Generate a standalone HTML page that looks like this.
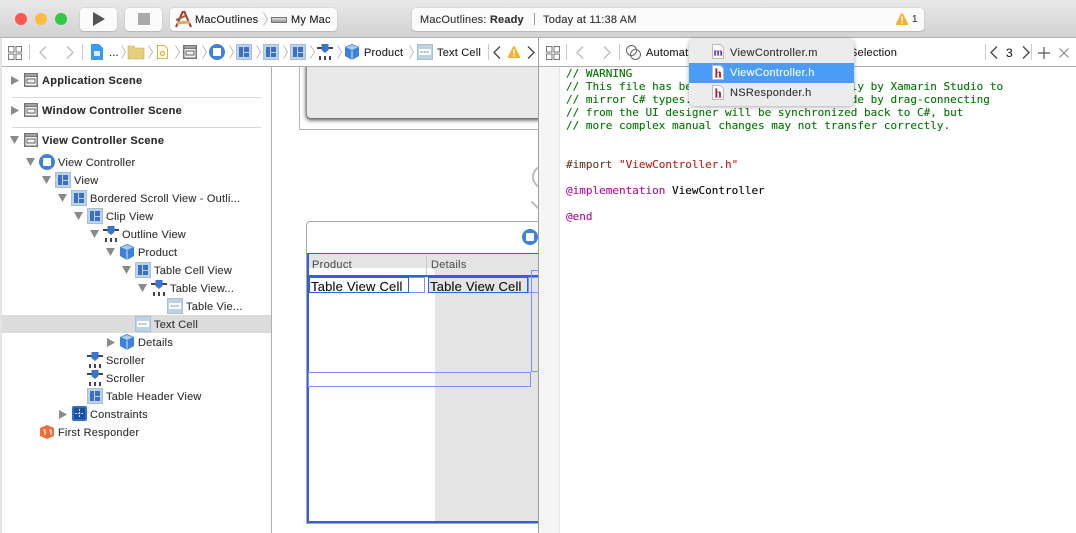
<!DOCTYPE html>
<html><head><meta charset="utf-8">
<style>
html,body{margin:0;padding:0}
body{width:1076px;height:533px;overflow:hidden;position:relative;background:#fff;font-family:"Liberation Sans",sans-serif;font-size:11px;color:#2a2a2a}
.a{position:absolute}
.t{position:absolute;white-space:nowrap;line-height:14px;font-size:11px;letter-spacing:.2px;color:#333;margin-top:1px;-webkit-text-stroke:.12px currentColor}
.b{font-weight:bold;color:#2c2c2c;letter-spacing:.3px}
.i{position:absolute;overflow:visible}
.code{position:absolute;left:566px;font:11px/13px "DejaVu Sans Mono","Liberation Mono",monospace;white-space:pre;color:#007400;-webkit-text-stroke:.1px currentColor}
.btn{position:absolute;top:8px;height:23px;background:#fbfbfb;border-radius:4px;box-shadow:0 1px 1px #b5b5b5,0 0 0 .5px #d0d0d0}
.hl{position:absolute;border:1px solid #7a93f0;box-sizing:border-box}
</style></head><body>
<svg width="0" height="0" style="position:absolute">
<defs>
<symbol id="grid" viewBox="0 0 14 14"><path d="M.5.5h5.500v5.500H.5zM8 .5h5.500v5.500H8zM.5 8h5.500v5.500H.5zM8 8h5.500v5.500H8z" fill="none" stroke="#777" stroke-width="1"/></symbol>
<symbol id="view" viewBox="0 0 16 16"><rect width="16" height="16" fill="#bcd2e6"/><rect x=".5" y=".5" width="15" height="15" fill="none" stroke="#a8c0d6"/><path d="M3 3h4v10H3zM8 3h5v5H8zM8 9h5v4H8z" fill="#3d70c4"/></symbol>
<symbol id="cell" viewBox="0 0 16 16"><rect width="16" height="16" fill="#bcd2e6"/><rect x=".5" y=".5" width="15" height="15" fill="none" stroke="#a8c0d6"/><rect x="2" y="5" width="12" height="6" fill="#fff"/><path d="M3.500 8h2M6.500 8h2M9.500 8h2" stroke="#8aa6c4" stroke-width="1.500"/></symbol>
<symbol id="vc" viewBox="0 0 16 16"><circle cx="8" cy="8" r="8" fill="#3f80d8"/><rect x="4" y="4" width="8" height="8" rx="1" fill="#fff"/></symbol>
<symbol id="outline" viewBox="0 0 16 16"><path d="M0 3h16v2H0z" fill="#444"/><path d="M4.500 0h7v6l-3.500 3-3.500-3z" fill="#3a74cc"/><path d="M2 12h2v4H2zM7 12h2v4H7zM12 12h2v4h-2z" fill="#444"/></symbol>
<symbol id="cube" viewBox="0 0 16 16"><path d="M8 0l7 3v9l-7 4-7-4V3z" fill="#3f80d8"/><path d="M8 1l6 2.300L8 6 2 3.300z" fill="#a9cdf2"/><path d="M8 6.500v9" stroke="#fff" stroke-width=".8"/></symbol>
<symbol id="scene" viewBox="0 0 14 14"><rect width="14" height="14" fill="#777"/><path d="M1.500 1.500h11v1h-11z" fill="#ccc"/><rect x="1.500" y="4" width="11" height="8.500" fill="#f1f1f1"/><rect x="3" y="6" width="8" height="4" fill="none" stroke="#666"/></symbol>
<symbol id="tri" viewBox="0 0 8 9"><path d="M0 0l8 4.500L0 9z" fill="#8a8a8a"/></symbol>
<symbol id="trid" viewBox="0 0 9 8"><path d="M0 0h9L4.500 8z" fill="#8a8a8a"/></symbol>
<symbol id="warn" viewBox="0 0 12 12" preserveAspectRatio="none"><path d="M6 0q.6 0 1 .8l5 10q.3 1.200-1 1.200H1q-1.300 0-1-1.200l5-10Q5.400 0 6 0z" fill="#f7b02c"/><path d="M5.200 3.500h1.600l-.2 4.800H5.400zM5.200 9h1.600v1.500H5.200z" fill="#fff"/></symbol>
<symbol id="sep" viewBox="0 0 5 14"><path d="M.5 .5l4 6.500-4 6.500" fill="none" stroke="#bbb"/></symbol>
<symbol id="doc" viewBox="0 0 12 15"><path d="M.5.500h8l3 3v11H.5z" fill="#fff" stroke="#bbb"/></symbol>
</defs></svg>

<!-- title bar -->
<div class="a" style="left:0;top:0;width:1076px;height:38px;background:linear-gradient(#e9e9e9,#d2d2d2);border-bottom:1px solid #b1b1b1;box-sizing:border-box"></div>
<div class="a" style="left:15px;top:13px;width:12px;height:12px;border-radius:50%;background:#fc5753"></div>
<div class="a" style="left:35px;top:13px;width:12px;height:12px;border-radius:50%;background:#fdbc40"></div>
<div class="a" style="left:55px;top:13px;width:12px;height:12px;border-radius:50%;background:#33c748"></div>
<div class="btn" style="left:80px;width:37px"></div>
<svg class="i" style="left:93px;top:12px" width="12" height="14"><path d="M0 0l12 7-12 7z" fill="#555"/></svg>
<div class="btn" style="left:125px;width:37px"></div>
<div class="a" style="left:138px;top:13px;width:12px;height:12px;background:#a9a9a9"></div>
<div class="btn" style="left:170px;width:167px"></div>
<svg class="i" style="left:175px;top:10px" width="18" height="18"><path d="M8 1L1 17M9 1l7 16" stroke="#b0322e" stroke-width="2" fill="none"/><path d="M2 13l13-1" stroke="#d9b06a" stroke-width="3"/><path d="M1 10l9-4" stroke="#8a6a3a" stroke-width="2"/></svg>
<div class="t" style="left:195px;top:12px;color:#222">MacOutlines</div>
<svg class="i" style="left:263px;top:12px" width="5" height="14"><use href="#sep"/></svg>
<div class="a" style="left:271px;top:17px;width:16px;height:6px;background:linear-gradient(#ddd,#999);border:1px solid #777;box-sizing:border-box"></div>
<div class="t" style="left:291px;top:12px;color:#222">My Mac</div>

<div class="btn" style="left:412px;width:512px"></div>
<div class="t" style="left:420px;top:12px">MacOutlines: <b style="color:#333">Ready</b></div>
<div class="a" style="left:534px;top:13px;width:1px;height:12px;background:#999"></div>
<div class="t" style="left:543px;top:12px">Today at 11:38 AM</div>
<svg class="i" style="left:896px;top:13px" width="12" height="12"><use href="#warn"/></svg>
<div class="t" style="left:912px;top:12px;font-size:10px">1</div>

<!-- jump bar -->
<div class="a" style="left:0;top:38px;width:1076px;height:29px;background:#fff;border-bottom:1px solid #b0b0b0;box-sizing:border-box"></div>
<div class="a" style="left:0;top:38px;width:2px;height:495px;background:#e4e4e4"></div>
<svg class="i" style="left:8px;top:46px" width="14" height="14"><use href="#grid"/></svg>
<div class="a" style="left:29px;top:44px;width:1px;height:16px;background:#ccc"></div>
<svg class="i" style="left:39px;top:46px" width="8" height="13"><path d="M7 .5L1 6.500l6 6" fill="none" stroke="#bbb" stroke-width="1.300"/></svg>
<svg class="i" style="left:66px;top:46px" width="8" height="13"><path d="M1 .5l6 6-6 6" fill="none" stroke="#bbb" stroke-width="1.300"/></svg>
<div class="a" style="left:82px;top:44px;width:1px;height:16px;background:#ccc"></div>
<svg class="i" style="left:91px;top:44px" width="12" height="16"><path d="M0 0h8l4 4v12H0z" fill="#3a9bee"/><rect x="3" y="7" width="6" height="5" fill="#d8edfc"/></svg>
<div class="t" style="left:109px;top:45px;color:#222">...</div>
<svg class="i" style="left:121px;top:45px" width="5" height="14"><use href="#sep"/></svg>
<svg class="i" style="left:128px;top:45px" width="16" height="14"><path d="M0 1h6l1 2h9v11H0z" fill="#e5cf7a" stroke="#c5ab52" stroke-width=".6"/></svg>
<svg class="i" style="left:148px;top:45px" width="5" height="14"><use href="#sep"/></svg>
<svg class="i" style="left:157px;top:45px" width="11" height="14"><path d="M.5.500h7l3 3v10H.5z" fill="#fffbe8" stroke="#e0b050"/><circle cx="5.500" cy="8.500" r="2" fill="none" stroke="#e0a030"/></svg>
<svg class="i" style="left:175px;top:45px" width="5" height="14"><use href="#sep"/></svg>
<svg class="i" style="left:183px;top:45px" width="14" height="14"><use href="#scene"/></svg>
<svg class="i" style="left:202px;top:45px" width="5" height="14"><use href="#sep"/></svg>
<svg class="i" style="left:209px;top:44px" width="16" height="16"><use href="#vc"/></svg>
<svg class="i" style="left:229px;top:45px" width="5" height="14"><use href="#sep"/></svg>
<svg class="i" style="left:236px;top:44px" width="16" height="16"><use href="#view"/></svg>
<svg class="i" style="left:256px;top:45px" width="5" height="14"><use href="#sep"/></svg>
<svg class="i" style="left:263px;top:44px" width="16" height="16"><use href="#view"/></svg>
<svg class="i" style="left:283px;top:45px" width="5" height="14"><use href="#sep"/></svg>
<svg class="i" style="left:290px;top:44px" width="16" height="16"><use href="#view"/></svg>
<svg class="i" style="left:310px;top:45px" width="5" height="14"><use href="#sep"/></svg>
<svg class="i" style="left:317px;top:44px" width="16" height="16"><use href="#outline"/></svg>
<svg class="i" style="left:337px;top:45px" width="5" height="14"><use href="#sep"/></svg>
<svg class="i" style="left:344px;top:44px" width="16" height="16"><use href="#cube"/></svg>
<div class="t" style="left:364px;top:45px;color:#222">Product</div>
<svg class="i" style="left:409px;top:45px" width="5" height="14"><use href="#sep"/></svg>
<svg class="i" style="left:417px;top:44px" width="16" height="16"><use href="#cell"/></svg>
<div class="t" style="left:437px;top:45px;color:#222">Text Cell</div>
<div class="a" style="left:488px;top:44px;width:1px;height:16px;background:#ccc"></div>
<svg class="i" style="left:493px;top:46px" width="8" height="13"><path d="M7 .5L1 6.500l6 6" fill="none" stroke="#444" stroke-width="1.300"/></svg>
<svg class="i" style="left:508px;top:46px" width="12" height="12"><use href="#warn"/></svg>
<svg class="i" style="left:527px;top:46px" width="8" height="13"><path d="M1 .5l6 6-6 6" fill="none" stroke="#444" stroke-width="1.300"/></svg>

<!-- right jump bar -->
<svg class="i" style="left:546px;top:46px" width="14" height="14"><use href="#grid"/></svg>
<div class="a" style="left:566px;top:44px;width:1px;height:16px;background:#ccc"></div>
<svg class="i" style="left:576px;top:46px" width="8" height="13"><path d="M7 .5L1 6.500l6 6" fill="none" stroke="#bbb" stroke-width="1.300"/></svg>
<svg class="i" style="left:603px;top:46px" width="8" height="13"><path d="M1 .5l6 6-6 6" fill="none" stroke="#bbb" stroke-width="1.300"/></svg>
<div class="a" style="left:619px;top:44px;width:1px;height:16px;background:#ccc"></div>
<svg class="i" style="left:626px;top:45px" width="15" height="15"><circle cx="5.500" cy="5.500" r="5" fill="none" stroke="#666"/><circle cx="9.500" cy="9.500" r="5" fill="none" stroke="#666"/></svg>
<div class="t" style="left:646px;top:45px;color:#222">Automatic</div>
<div class="t" style="left:850px;top:45px;color:#222">Selection</div>
<div class="a" style="left:985px;top:44px;width:1px;height:16px;background:#ccc"></div>
<svg class="i" style="left:990px;top:46px" width="8" height="13"><path d="M7 .5L1 6.500l6 6" fill="none" stroke="#444" stroke-width="1.300"/></svg>
<div class="t" style="left:1006px;top:45px;color:#222;font-size:12px">3</div>
<svg class="i" style="left:1022px;top:46px" width="8" height="13"><path d="M1 .5l6 6-6 6" fill="none" stroke="#444" stroke-width="1.300"/></svg>
<div class="a" style="left:1031px;top:44px;width:1px;height:16px;background:#ccc"></div>
<svg class="i" style="left:1038px;top:47px" width="12" height="12"><path d="M6 0v12M0 6h12" stroke="#555" stroke-width="1.200"/></svg>
<svg class="i" style="left:1059px;top:48px" width="10" height="10"><path d="M.5.500l9 9M9.500.500l-9 9" stroke="#888" stroke-width="1.100"/></svg>

<!-- left tree -->
<svg class="i" style="left:11px;top:76px" width="8" height="9"><use href="#tri"/></svg>
<svg class="i" style="left:24px;top:73px" width="14" height="14"><use href="#scene"/></svg>
<div class="t b" style="left:42px;top:73px">Application Scene</div>
<div class="a" style="left:12px;top:97px;width:249px;height:1px;background:#d8d8d8"></div>
<svg class="i" style="left:11px;top:106px" width="8" height="9"><use href="#tri"/></svg>
<svg class="i" style="left:24px;top:103px" width="14" height="14"><use href="#scene"/></svg>
<div class="t b" style="left:42px;top:103px">Window Controller Scene</div>
<div class="a" style="left:12px;top:127px;width:249px;height:1px;background:#d8d8d8"></div>
<svg class="i" style="left:10px;top:136px" width="9" height="8"><use href="#trid"/></svg>
<svg class="i" style="left:24px;top:133px" width="14" height="14"><use href="#scene"/></svg>
<div class="t b" style="left:42px;top:133px">View Controller Scene</div>

<div class="a" style="left:2px;top:315px;width:269px;height:18px;background:#dcdcdc"></div>

<svg class="i" style="left:26px;top:158px" width="9" height="8"><use href="#trid"/></svg>
<svg class="i" style="left:39px;top:154px" width="16" height="16"><use href="#vc"/></svg>
<div class="t" style="left:58px;top:155px">View Controller</div>
<svg class="i" style="left:42px;top:176px" width="9" height="8"><use href="#trid"/></svg>
<svg class="i" style="left:55px;top:172px" width="16" height="16"><use href="#view"/></svg>
<div class="t" style="left:74px;top:173px">View</div>
<svg class="i" style="left:58px;top:194px" width="9" height="8"><use href="#trid"/></svg>
<svg class="i" style="left:71px;top:190px" width="16" height="16"><use href="#view"/></svg>
<div class="t" style="left:90px;top:191px">Bordered Scroll View - Outli...</div>
<svg class="i" style="left:74px;top:212px" width="9" height="8"><use href="#trid"/></svg>
<svg class="i" style="left:87px;top:208px" width="16" height="16"><use href="#view"/></svg>
<div class="t" style="left:106px;top:209px">Clip View</div>
<svg class="i" style="left:90px;top:230px" width="9" height="8"><use href="#trid"/></svg>
<svg class="i" style="left:103px;top:226px" width="16" height="16"><use href="#outline"/></svg>
<div class="t" style="left:122px;top:227px">Outline View</div>
<svg class="i" style="left:106px;top:248px" width="9" height="8"><use href="#trid"/></svg>
<svg class="i" style="left:119px;top:244px" width="16" height="16"><use href="#cube"/></svg>
<div class="t" style="left:138px;top:245px">Product</div>
<svg class="i" style="left:122px;top:266px" width="9" height="8"><use href="#trid"/></svg>
<svg class="i" style="left:135px;top:262px" width="16" height="16"><use href="#view"/></svg>
<div class="t" style="left:154px;top:263px">Table Cell View</div>
<svg class="i" style="left:138px;top:284px" width="9" height="8"><use href="#trid"/></svg>
<svg class="i" style="left:151px;top:280px" width="16" height="16"><use href="#outline"/></svg>
<div class="t" style="left:170px;top:281px">Table View...</div>
<svg class="i" style="left:167px;top:298px" width="16" height="16"><use href="#cell"/></svg>
<div class="t" style="left:186px;top:299px">Table Vie...</div>
<svg class="i" style="left:135px;top:316px" width="16" height="16"><use href="#cell"/></svg>
<div class="t" style="left:154px;top:317px">Text Cell</div>
<svg class="i" style="left:107px;top:338px" width="8" height="9"><use href="#tri"/></svg>
<svg class="i" style="left:119px;top:334px" width="16" height="16"><use href="#cube"/></svg>
<div class="t" style="left:138px;top:335px">Details</div>
<svg class="i" style="left:87px;top:352px" width="16" height="16"><use href="#outline"/></svg>
<div class="t" style="left:106px;top:353px">Scroller</div>
<svg class="i" style="left:87px;top:370px" width="16" height="16"><use href="#outline"/></svg>
<div class="t" style="left:106px;top:371px">Scroller</div>
<svg class="i" style="left:87px;top:388px" width="16" height="16"><use href="#view"/></svg>
<div class="t" style="left:106px;top:389px">Table Header View</div>
<svg class="i" style="left:59px;top:410px" width="8" height="9"><use href="#tri"/></svg>
<svg class="i" style="left:72px;top:406px" width="15" height="15"><rect width="15" height="15" rx="2" fill="#2f6fc9"/><rect x="2" y="2" width="11" height="11" fill="#1d4fa0"/><path d="M7.500 3v9M3 7.500h9" stroke="#cfe2fa" stroke-dasharray="2 1"/></svg>
<div class="t" style="left:90px;top:407px">Constraints</div>
<svg class="i" style="left:40px;top:425px" width="14" height="14"><path d="M7 0l7 3v8l-7 3-7-3V3z" fill="#ec6f3c"/><path d="M3 5h2v5M9 5h2v5" stroke="#fff" fill="none"/></svg>
<div class="t" style="left:58px;top:425px">First Responder</div>

<div class="a" style="left:271px;top:67px;width:1px;height:466px;background:#b0b0b0"></div>

<!-- canvas -->
<div class="a" style="left:272px;top:67px;width:266px;height:466px;background:#fff;overflow:hidden">
  <div class="a" style="left:27px;top:-10px;width:260px;height:73px;border:1px solid #b5b5b5;box-sizing:border-box"></div>
  <div class="a" style="left:35px;top:-20px;width:260px;height:71px;background:#e9e9e9;border-radius:4px;box-shadow:-1px 2px 4px #444"></div>
  <div class="a" style="left:260px;top:98px;width:24px;height:24px;border-radius:50%;border:2px solid #bbb;box-sizing:border-box"></div>
  <svg class="i" style="left:259px;top:134px" width="8" height="12"><path d="M.5.500l8 8" stroke="#bbb" stroke-width="2"/></svg>
  <div class="a" style="left:34px;top:154px;width:260px;height:303px;background:#fff;border:1px solid #a9a9a9;border-radius:4px 0 0 0;box-sizing:border-box"></div>
  <svg class="i" style="left:250px;top:162px" width="16" height="16"><use href="#vc"/></svg>
  <!-- table: header grey, white column with rounded corner, grey column -->
  <div class="a" style="left:36px;top:187px;width:230px;height:268px;background:#e4e4e4"></div>
  <div class="a" style="left:37px;top:201px;width:126px;height:254px;background:#fff;border-radius:0 5px 0 0"></div>
  <div class="a" style="left:154px;top:188px;width:1px;height:20px;background:#ccc"></div>
  <div class="t" style="left:40px;top:190px;letter-spacing:.3px;color:#555">Product</div>
  <div class="t" style="left:159px;top:190px;letter-spacing:.3px;color:#555">Details</div>
  <div class="a" style="left:35px;top:186px;width:240px;height:270px;border:2px solid #3060e0;border-top-width:1.500px;box-sizing:border-box"></div>
  <div class="a" style="left:37px;top:208px;width:240px;height:2px;background:#3060e0"></div>
  <div class="hl" style="left:37px;top:210px;width:116px;height:16px"></div>
  <div class="hl" style="left:37px;top:210px;width:100px;height:16px;border-color:#3060e0;background:#fff"></div>
  <div class="hl" style="left:156px;top:210px;width:100px;height:16px;border-color:#3060e0;background:#e4e4e4"></div>
  <div class="hl" style="left:256px;top:210px;width:20px;height:16px;background:transparent"></div>
  <div class="t" style="left:39px;top:212px;font-size:13px;letter-spacing:.2px;color:#111">Table View Cell</div>
  <div class="t" style="left:158px;top:212px;font-size:13px;letter-spacing:.2px;color:#111">Table View Cell</div>
  <div class="hl" style="left:259px;top:203px;width:20px;height:102px;background:transparent"></div>
  <div class="hl" style="left:36px;top:305px;width:223px;height:15px;background:transparent"></div>
</div>

<!-- divider + code -->
<div class="a" style="left:538px;top:38px;width:1px;height:495px;background:#a0a0a0"></div>
<div class="a" style="left:539px;top:67px;width:20px;height:466px;background:#f5f5f5;border-right:1px solid #e6e6e6"></div>
<div class="code" style="top:67px">// WARNING
// This file has been generated automatically by Xamarin Studio to
// mirror C# types. Changes in this file made by drag-connecting
// from the UI designer will be synchronized back to C#, but
// more complex manual changes may not transfer correctly.</div>
<div class="code" style="top:158px;color:#643820">#import <span style="color:#c41a16">"ViewController.h"</span></div>
<div class="code" style="top:184px;color:#aa0d91">@implementation <span style="color:#000">ViewController</span></div>
<div class="code" style="top:210px;color:#aa0d91">@end</div>

<!-- popup -->
<div class="a" style="left:689px;top:39px;width:165px;height:67px;background:#ececec;border-radius:5px;box-shadow:0 1px 5px rgba(0,0,0,.35)"></div>
<div class="a" style="left:689px;top:63px;width:165px;height:20px;background:#4a9cf6"></div>
<svg class="i" style="left:712px;top:44px" width="12" height="15"><use href="#doc"/><text x="1.500" y="11.500" font-family="Liberation Serif, serif" font-weight="bold" font-size="11" fill="#5c2a9d">m</text></svg>
<div class="t" style="left:730px;top:45px;letter-spacing:.3px;color:#333">ViewController.m</div>
<svg class="i" style="left:712px;top:65px" width="12" height="15"><use href="#doc"/><text x="2.500" y="12.500" font-family="Liberation Serif, serif" font-weight="bold" font-size="13" fill="#a3202f">h</text></svg>
<div class="t" style="left:730px;top:65px;letter-spacing:.3px;color:#fff">ViewController.h</div>
<svg class="i" style="left:712px;top:85px" width="12" height="15"><use href="#doc"/><text x="2.500" y="12.500" font-family="Liberation Serif, serif" font-weight="bold" font-size="13" fill="#a3202f">h</text></svg>
<div class="t" style="left:730px;top:85px;letter-spacing:.3px;color:#333">NSResponder.h</div>
</body></html>
